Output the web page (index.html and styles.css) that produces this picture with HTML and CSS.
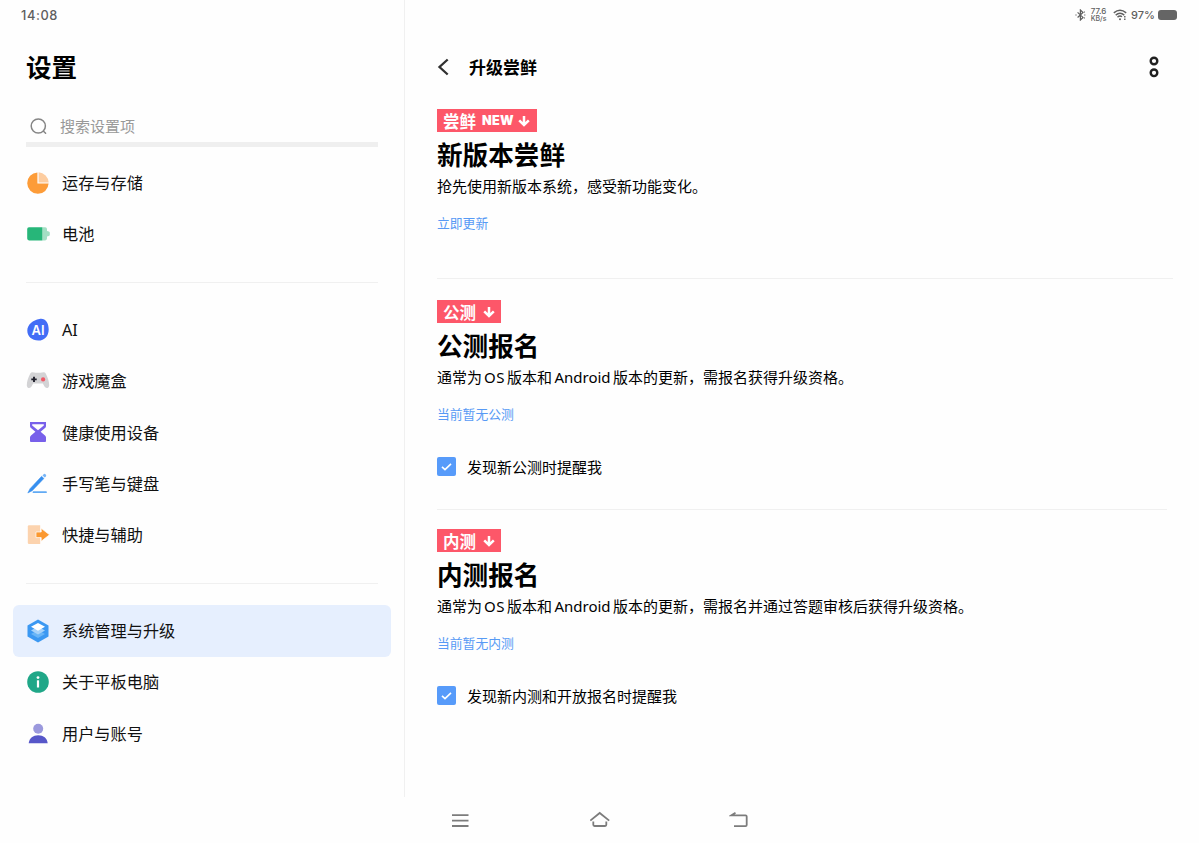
FILE: index.html
```
<!DOCTYPE html>
<html lang="zh-CN">
<head>
  <meta charset="UTF-8">
  <meta name="viewport" content="width=device-width, initial-scale=1.0">
  <title>设置</title>
  <link rel="stylesheet" href="styles.css">
</head>
<body>
  <div class="screen">
    <aside class="sidebar">
      <div class="status status-left">14:08</div>
      <h1>设置</h1>
      <div class="search">
        <svg width="18" height="18" viewBox="0 0 18 18" fill="none" stroke="#858585" stroke-width="1.5"><circle cx="8.3" cy="9" r="7.1"/><path d="M13.5 14.200l2.100 2.100" stroke-linecap="round"/></svg>
        <span>搜索设置项</span>
      </div>

      <ul class="menu">
        <li class="item">
          <svg class="icon" viewBox="0 0 24 24"><path d="M11.4 1.4A10.7 10.7 0 1 0 22.6 12.6H11.4z" fill="#fd9c38"/><path d="M12.6 1.3A10.7 10.7 0 0 1 22.7 11.4H12.6z" fill="#fdcda0"/></svg>
          <span>运存与存储</span>
        </li>
        <li class="item">
          <svg class="icon" viewBox="0 0 24 24"><path d="M16 5.2h3.2a1.8 1.8 0 0 1 1.8 1.8v2l1.9.6q.9.3.9 1.2v2q0 .9-.9 1.2l-1.9.6v2a1.8 1.8 0 0 1-1.8 1.8H16z" fill="#a3dfc4"/><path d="M3 5.2h13.2v13.2H3a1.8 1.8 0 0 1-1.8-1.8V7A1.8 1.8 0 0 1 3 5.2z" fill="#27b679"/></svg>
          <span>电池</span>
        </li>
      </ul>
      <ul class="menu">
        <li class="item">
          <svg class="icon" viewBox="0 0 24 24"><path d="M13.5.9C19.2-.2 22.600 4.500 22.700 11.400c0 6.600-4.200 11.100-10.300 11.100C5.800 22.500 1.300 18.600 1.300 12.600 1.300 6.500 7 2 13.500.9z" fill="#426df6"/><text class="ai" x="12" y="16.500" text-anchor="middle">AI</text></svg>
          <span class="label-ai">AI</span>
        </li>
        <li class="item">
          <svg class="icon" viewBox="0 0 24 24"><path d="M4.300 4.600Q5.100 3.200 6.500 3.300l3 .5h5l3-.5q1.500-.1 2.200 1.300c1.700 3.200 3.700 8.300 3.500 11.800-.2 2.900-3.400 3.500-4.700 1.200l-1.700-3.200H7.200l-1.700 3.200C4.200 19.900 1 19.300.8 16.400.6 12.900 2.600 7.800 4.300 4.600z" fill="#d3d3d5"/><path d="M5.300 10.400h5.400M8 7.700v5.400" stroke="#20202c" stroke-width="1.900"/><circle cx="17.100" cy="10.400" r="2.100" fill="#f15866"/></svg>
          <span>游戏魔盒</span>
        </li>
        <li class="item">
          <svg class="icon" viewBox="0 0 24 24"><path fill-rule="evenodd" d="M4 1h16v4q0 1.300-1 2L14.600 10.700 19 14.500q1 .8 1 2V20q0 .9-.9.9H4.900Q4 20.900 4 20v-3.500q0-1.200 1-2L9.400 10.700 5 7Q4 6.300 4 5zM6.200 3.200v1.400L12 9.300l5.800-4.700V3.200z" fill="#7860ea"/></svg>
          <span>健康使用设备</span>
        </li>
        <li class="item">
          <svg class="icon" viewBox="0 0 24 24"><path d="M1.800 21L4 16.700 15.600 4.300l2.300 2.200L6.200 18.700z" fill="#368fef" stroke="#368fef" stroke-width=".5"/><path d="M16.500 3.400l1.100-1.200a1.650 1.650 0 0 1 2.300 2.300l-1.100 1.100z" fill="#78b5f6"/><path d="M7.500 20.200H20" stroke="#61aaf4" stroke-width="1.800" stroke-linecap="round"/></svg>
          <span>手写笔与键盘</span>
        </li>
        <li class="item">
          <svg class="icon" viewBox="0 0 24 24"><path d="M3 2.300h11.200v18.700H3q-1.200 0-1.200-1.200V3.500Q1.800 2.300 3 2.300z" fill="#fcd3ae"/><path d="M10 9h5.200V5.300L23.500 11.800l-8.300 6.500v-3.700H10z" fill="#fb982f" stroke="#fff" stroke-width=".7"/></svg>
          <span>快捷与辅助</span>
        </li>
      </ul>
      <ul class="menu">
        <li class="item active">
          <svg class="icon" viewBox="0 0 24 24"><path d="M12 .5l10.500 5.900v11.200L12 23.500 1.500 17.600V6.400z" fill="#3b98f2"/><path d="M5 14.900l7-3.900 7 3.900-7 4z" fill="#69b5f7"/><path d="M5 11.400l7-3.900 7 3.900-7 4z" fill="#a6d2fa"/><path d="M5 7.800l7-3.900 7 3.900-7 4z" fill="#fff"/></svg>
          <span>系统管理与升级</span>
        </li>
        <li class="item">
          <svg class="icon" viewBox="0 0 24 24"><circle cx="12" cy="12" r="10.800" fill="#20a788"/><circle cx="12" cy="7.600" r="1.400" fill="#fff"/><path d="M12 10.300v7.200" stroke="#fff" stroke-width="2.200"/></svg>
          <span>关于平板电脑</span>
        </li>
        <li class="item">
          <svg class="icon" viewBox="0 0 24 24"><circle cx="12.200" cy="6.700" r="5" fill="#9b99dd"/><path d="M2.700 21.300C3.300 16.200 7 13.300 12.200 13.300s8.900 2.900 9.500 8z" fill="#5757c9"/></svg>
          <span>用户与账号</span>
        </li>
      </ul>
    </aside>

    <main class="content">
      <div class="status status-right">
        <svg width="11" height="12" viewBox="0 0 11 12" fill="none" stroke="#5e5e5e" stroke-width="1.200"><path d="M2.600 3.400l5.400 5L5.400 11V1L8 3.500l-5.400 5"/><path d="M.4 6h1.200M9.200 6h1.200M9 3.300l.8-.5M9 8.700l.8.500"/></svg>
        <span class="speed"><span>77.6</span><span>KB/s</span></span>
        <svg class="wifi" width="14" height="12" viewBox="0 0 14 12" fill="none" stroke="#5e5e5e" stroke-width="1.400"><path d="M.8 3.900Q7-1.300 13.200 3.900M2.700 6.100Q7 2.500 11.300 6.100M4.500 8.100Q7 6.100 9 7.800"/><circle cx="7" cy="10.200" r="1" fill="#5e5e5e" stroke="none"/><path d="M11.800 7v1.500M11.800 9.500V11"/></svg>
        <span class="percent">97%</span>
        <span class="battery"></span>
      </div>
      <header class="topbar">
        <svg width="14" height="18" viewBox="0 0 14 18" fill="none" stroke="#303030" stroke-width="2.300"><path d="M10.700 1.500L2.500 9l8.200 7.500"/></svg>
        <h2>升级尝鲜</h2>
        <svg class="more" width="12" height="22" viewBox="0 0 12 22" fill="none" stroke="#202020" stroke-width="2.400"><circle cx="6" cy="5" r="3.300"/><circle cx="6" cy="16.800" r="3.300"/></svg>
      </header>

      <section class="card">
        <div class="badge"><span>尝鲜</span><span class="new">NEW</span><svg width="12" height="12" viewBox="0 0 12 12" fill="none" stroke="#fff" stroke-width="2.500"><path d="M6 1v9M1.200 5.400L6 10l4.800-4.600"/></svg></div>
        <h3>新版本尝鲜</h3>
        <p>抢先使用新版本系统，感受新功能变化。</p>
        <a class="link">立即更新</a>
      </section>

      <section class="card">
        <div class="badge small"><span>公测</span><svg width="12" height="12" viewBox="0 0 12 12" fill="none" stroke="#fff" stroke-width="2.500"><path d="M6 1v9M1.200 5.400L6 10l4.800-4.600"/></svg></div>
        <h3>公测报名</h3>
        <p>通常为<span class="latin os">OS</span>版本和<span class="latin android">Android</span>版本的更新，需报名获得升级资格。</p>
        <a class="link">当前暂无公测</a>
        <div class="remind">
          <span class="check"><svg width="19" height="19" viewBox="0 0 19 19" fill="none" stroke="#fff" stroke-width="1.600"><path d="M5 9.800l3 2.900L14 6.900"/></svg></span>
          <span>发现新公测时提醒我</span>
        </div>
      </section>

      <section class="card">
        <div class="badge small"><span>内测</span><svg width="12" height="12" viewBox="0 0 12 12" fill="none" stroke="#fff" stroke-width="2.500"><path d="M6 1v9M1.200 5.400L6 10l4.800-4.600"/></svg></div>
        <h3>内测报名</h3>
        <p>通常为<span class="latin os">OS</span>版本和<span class="latin android">Android</span>版本的更新，需报名并通过答题审核后获得升级资格。</p>
        <a class="link">当前暂无内测</a>
        <div class="remind">
          <span class="check"><svg width="19" height="19" viewBox="0 0 19 19" fill="none" stroke="#fff" stroke-width="1.600"><path d="M5 9.800l3 2.900L14 6.900"/></svg></span>
          <span>发现新内测和开放报名时提醒我</span>
        </div>
      </section>
    </main>
  </div>

  <nav class="navbar">
    <svg width="20" height="20" viewBox="0 0 20 20" fill="none" stroke="#7c7c7c" stroke-width="1.800"><path d="M2 5.200h16.500M2 10.600h16.500M2 16h16.500"/></svg>
    <svg width="20" height="20" viewBox="0 0 20 20" fill="none" stroke="#7c7c7c" stroke-width="1.800"><path d="M.3 10.600L9.700 3l9.500 7.600M3.300 11.500v3.300q0 1.200 1.200 1.200h10.600q1.200 0 1.200-1.200v-3.300"/></svg>
    <svg width="20" height="20" viewBox="0 0 20 20" fill="none" stroke="#7c7c7c" stroke-width="1.800"><path d="M6.500 2.700L2.500 5.300h14q1.200 0 1.200 1.200v8.400q0 1.200-1.200 1.200H5"/></svg>
  </nav>
</body>
</html>
```

FILE: styles.css
```
* {
  box-sizing: border-box;
}

body {
  margin: 0;
  width: 1199px;
  height: 843px;
  overflow: hidden;
  background: #fefefe;
  color: #111;
  font-family: 'Noto Sans CJK SC', sans-serif;
  white-space: nowrap;
}

h1, h2, h3, p, ul {
  margin: 0;
  padding: 0;
}

.screen {
  display: flex;
  height: 797px;
}

.sidebar {
  width: 405px;
  padding: 0 13px;
  border-right: 1px solid #f0f0f0;
}

.status {
  display: flex;
  align-items: center;
  height: 30px;
  color: #5e5e5e;
  font-family: Inter, sans-serif;
  font-weight: 500;
}

.status-left {
  padding-left: 8px;
  font-size: 12.8px;
  letter-spacing: 0.6px;
}

h1 {
  padding-left: 13px;
  margin-top: 16px;
  font-size: 25.5px;
  font-weight: 700;
  line-height: 40px;
  color: #000;
}

.search {
  display: flex;
  align-items: center;
  gap: 12px;
  height: 38px;
  margin: 23px 13px 10px;
  padding: 0 4px;
  border-bottom: 5px solid #efefef;
  font-size: 15px;
  color: #999;
}

.menu {
  list-style: none;
}

.menu + .menu {
  margin-top: 22px;
  padding-top: 22.3px;
  position: relative;
}

.menu + .menu::before {
  content: "";
  position: absolute;
  top: 0;
  left: 13px;
  right: 13px;
  height: 1px;
  background: #f0f0f0;
}

.item {
  display: flex;
  align-items: center;
  gap: 12px;
  height: 51.4px;
  padding-left: 13px;
  border-radius: 6px;
  font-size: 16.2px;
}

.item span {
  padding-bottom: 2px;
}

.item .label-ai {
  padding-bottom: 0;
  font-family: 'Noto Sans', sans-serif;
}

.item.active {
  background: #e6effe;
}

.icon {
  width: 24px;
  height: 24px;
}

.ai {
  font: 600 13px Inter, sans-serif;
  fill: #fff;
}

.content {
  flex: 1;
  padding-left: 32px;
}

.status-right {
  justify-content: flex-end;
  padding-right: 22px;
}

.speed {
  display: flex;
  flex-direction: column;
  align-items: center;
  width: 17px;
  margin: 0 6px 0 4px;
  font-size: 8px;
  line-height: 7.5px;
}

.speed span:last-child {
  font-size: 7px;
}

.percent {
  margin: 0 3px 0 4px;
  font-size: 11px;
}

.battery {
  width: 19px;
  height: 10px;
  border-radius: 3px;
  background: #656565;
}

.topbar {
  display: flex;
  align-items: center;
  height: 40px;
  margin-top: 17px;
  padding-right: 39px;
}

h2 {
  margin-left: 18px;
  padding-bottom: 2px;
  font-size: 17px;
  font-weight: 700;
  color: #000;
}

.more {
  margin-left: auto;
}

.card {
  height: 192px;
  margin-right: 26px;
  padding-top: 22px;
  border-bottom: 1px solid #f0f0f0;
}

.card:nth-of-type(2) {
  height: 231px;
  margin-right: 32px;
  padding-top: 21px;
}

.card:nth-of-type(3) {
  padding-top: 19px;
  border: 0;
}

.badge {
  display: flex;
  align-items: center;
  width: 100px;
  height: 23px;
  padding-left: 6px;
  background: #fd5769;
  color: #fff;
  font-size: 16.5px;
  font-weight: 700;
}

.badge.small {
  width: 64px;
}

.badge.small svg {
  margin-left: 7px;
}

.badge .new {
  width: 35px;
  margin: 0 1px 0 6px;
  font: 900 12.6px Inter, sans-serif;
  letter-spacing: 0.3px;
}

h3 {
  margin: 3px 0 1px;
  font-size: 25.6px;
  font-weight: 700;
  line-height: 38px;
  color: #000;
}

p {
  font-size: 15px;
  line-height: 24px;
  color: #000;
}

.latin {
  display: inline-block;
  text-align: center;
  font-family: 'Noto Sans', sans-serif;
}

.os {
  width: 25px;
  letter-spacing: 0.6px;
}

.android {
  width: 61px;
}

.link {
  display: block;
  margin-top: 15px;
  font-size: 12.8px;
  line-height: 20px;
  color: #579af5;
}

.remind {
  display: flex;
  align-items: center;
  gap: 11px;
  margin-top: 32px;
  font-size: 15px;
  color: #000;
}

.check {
  width: 19px;
  height: 19px;
  border-radius: 2px;
  background: #579bfa;
}

.check svg {
  display: block;
}

.navbar {
  display: flex;
  justify-content: center;
  align-items: center;
  gap: 119.5px;
  height: 46px;
}
```
